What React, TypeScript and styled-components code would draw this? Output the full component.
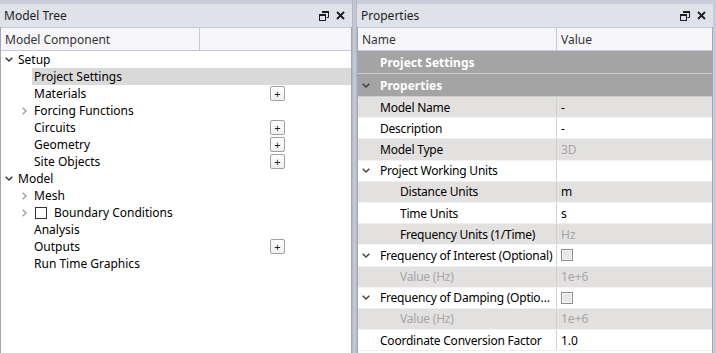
import styled, { createGlobalStyle } from 'styled-components';

const GlobalStyle = createGlobalStyle`
  html, body {
    margin: 0;
    padding: 0;
  }
  body {
    background: #c9cdda;
    font-family: 'Noto Sans', 'DejaVu Sans', sans-serif;
    font-size: 12px;
    color: #000;
  }
`;

const Workspace = styled.div`
  display: flex;
  height: 353px;
  padding-top: 4px;
  box-sizing: border-box;
  background: #c9cdda;
  overflow: hidden;
`;

const Panel = styled.section<{ $width?: number }>`
  display: flex;
  flex-direction: column;
  width: ${({ $width }) => ($width ? `${$width}px` : 'auto')};
  flex: ${({ $width }) => ($width ? 'none' : '1')};
  margin-right: ${({ $width }) => ($width ? '0' : '3px')};
  min-width: 0;
`;

const Splitter = styled.div`
  width: 5px;
  flex: none;
  margin-top: -4px;
  background: #c3c7d3;
  border-left: 1px solid #b4b8c4;
  border-right: 1px solid #b4b8c4;
  box-sizing: border-box;
`;

const TitleBar = styled.header`
  display: flex;
  align-items: center;
  height: 23px;
  flex: none;
  padding: 0 7px 0 4px;
  background: #dfe2ea;
  font-size: 12px;
  color: #1e1e1e;
`;

const TitleText = styled.span`
  flex: 1;
`;

const TitleButtons = styled.div`
  display: flex;
  align-items: center;
  gap: 7px;
`;

const Body = styled.div`
  flex: 1;
  background: #fff;
  border-left: 1px solid #a3a7b3;
  border-right: 1px solid #a3a7b3;
  overflow: hidden;
  min-height: 0;
`;

const HeaderRow = styled.div<{ $cols: string }>`
  display: grid;
  grid-template-columns: ${({ $cols }) => $cols};
  height: 24px;
  box-sizing: border-box;
  background: #f6f6f9;
  border-bottom: 1px solid #c4c9d6;
  border-top: 1px solid #c4c9d6;
`;

const HeaderCell = styled.div<{ $pad: number }>`
  display: flex;
  align-items: center;
  padding-left: ${({ $pad }) => $pad}px;
  border-right: 1px solid #c4c9d6;
  color: #333;
  font-size: 12px;
  &:last-child {
    border-right: none;
  }
`;

/* ---------- model tree ---------- */

const TreeRow = styled.div<{ $indent: number }>`
  display: flex;
  align-items: stretch;
  height: 17px;
  padding-left: ${({ $indent }) => $indent}px;
`;

const ChevronSlot = styled.div`
  width: 15px;
  flex: none;
  display: flex;
  align-items: center;
  justify-content: center;
`;

const TreeItem = styled.div<{ $selected?: boolean }>`
  flex: 1;
  display: flex;
  align-items: center;
  padding-left: 2px;
  background: ${({ $selected }) => ($selected ? '#d9d9d9' : 'transparent')};
`;

const TreeLabel = styled.span`
  flex: 1;
  white-space: nowrap;
`;

const TreeCheck = styled.span`
  width: 10px;
  height: 10px;
  border: 1px solid #333;
  background: #fff;
  margin: 0 7px 0 1px;
`;

const PlusButton = styled.span`
  width: 13px;
  height: 13px;
  margin-right: 66px;
  border: 1px solid #a0a0a0;
  border-radius: 2px;
  background: linear-gradient(#ffffff, #f0f0f0);
  display: flex;
  align-items: center;
  justify-content: center;
  font-size: 11px;
  line-height: 1;
  color: #222;
`;

/* ---------- property grid ---------- */

const CategoryRow = styled.div`
  display: flex;
  align-items: center;
  height: 23px;
  box-sizing: border-box;
  background: #a4a4a4;
  border-bottom: 1px solid #cfcfcf;
  color: #fff;
  font-weight: bold;
  padding-left: 4px;
`;

const PropRow = styled.div<{ $shaded: boolean }>`
  display: grid;
  grid-template-columns: 199px 1fr;
  height: 21.2px;
  box-sizing: border-box;
  background: ${({ $shaded }) => ($shaded ? '#e3e0e0' : '#fff')};
  border-bottom: 1px solid ${({ $shaded }) => ($shaded ? '#f4f2f2' : '#eeeeee')};
`;

const NameCell = styled.div<{ $disabled?: boolean }>`
  display: flex;
  align-items: center;
  padding-left: 4px;
  border-right: 1px solid #d0d0d0;
  color: ${({ $disabled }) => ($disabled ? '#a6a6a6' : '#000')};
  min-width: 0;
`;

const ExpandSlot = styled.span<{ $level: number }>`
  width: ${({ $level }) => ($level === 2 ? 38 : 18)}px;
  flex: none;
  display: flex;
  align-items: center;
`;

const NameText = styled.span`
  overflow: hidden;
  white-space: nowrap;
  text-overflow: ellipsis;
  padding-right: 1px;
  letter-spacing: -0.22px;
`;

const ValueCell = styled.div<{ $disabled?: boolean }>`
  display: flex;
  align-items: center;
  padding-left: 4px;
  color: ${({ $disabled }) => ($disabled ? '#a6a6a6' : '#000')};
`;

const ValueCheck = styled.span`
  width: 10px;
  height: 10px;
  border: 1px solid #8e8e8e;
  background: #e6e6e6;
  box-shadow: inset 0 0 0 1px #f6f6f6;
`;

const RestoreIcon = () => (
  <svg width="10" height="10" viewBox="0 0 10 10">
    <path d="M3 0.5h6.5v6h-2" fill="none" stroke="#1e1e1e" strokeWidth="1" />
    <rect x="3" y="0" width="7" height="2" fill="#1e1e1e" />
    <rect x="0.5" y="3.5" width="6" height="6" fill="none" stroke="#1e1e1e" strokeWidth="1" />
    <rect x="0" y="3" width="7" height="2" fill="#1e1e1e" />
  </svg>
);

const CloseIcon = () => (
  <svg width="9" height="9" viewBox="0 0 9 9">
    <path d="M1 1L8 8M8 1L1 8" stroke="#1e1e1e" strokeWidth="1.8" />
  </svg>
);

const ChevronDown = ({ color = '#404040' }: { color?: string }) => (
  <svg width="8" height="5" viewBox="0 0 8 5">
    <path d="M0.7 0.7L4 4L7.3 0.7" fill="none" stroke={color} strokeWidth="1.4" />
  </svg>
);

const ChevronRight = () => (
  <svg width="5" height="8" viewBox="0 0 5 8">
    <path d="M0.7 0.7L4 4L0.7 7.3" fill="none" stroke="#a0a0a0" strokeWidth="1.4" />
  </svg>
);

interface TreeNode {
  label: string;
  level: 1 | 2;
  expander?: 'open' | 'closed';
  plus?: boolean;
  selected?: boolean;
  checkbox?: boolean;
}

const treeNodes: TreeNode[] = [
  { label: 'Setup', level: 1, expander: 'open' },
  { label: 'Project Settings', level: 2, selected: true },
  { label: 'Materials', level: 2, plus: true },
  { label: 'Forcing Functions', level: 2, expander: 'closed' },
  { label: 'Circuits', level: 2, plus: true },
  { label: 'Geometry', level: 2, plus: true },
  { label: 'Site Objects', level: 2, plus: true },
  { label: 'Model', level: 1, expander: 'open' },
  { label: 'Mesh', level: 2, expander: 'closed' },
  { label: 'Boundary Conditions', level: 2, expander: 'closed', checkbox: true },
  { label: 'Analysis', level: 2 },
  { label: 'Outputs', level: 2, plus: true },
  { label: 'Run Time Graphics', level: 2 },
];

interface PropItem {
  name: string;
  value?: string;
  level: 1 | 2;
  expandable?: boolean;
  disabled?: boolean;
  check?: boolean;
}

const props: PropItem[] = [
  { name: 'Model Name', value: '-', level: 1 },
  { name: 'Description', value: '-', level: 1 },
  { name: 'Model Type', value: '3D', level: 1, disabled: true },
  { name: 'Project Working Units', level: 1, expandable: true },
  { name: 'Distance Units', value: 'm', level: 2 },
  { name: 'Time Units', value: 's', level: 2 },
  { name: 'Frequency Units (1/Time)', value: 'Hz', level: 2, disabled: true },
  { name: 'Frequency of Interest (Optional)', level: 1, expandable: true, check: true },
  { name: 'Value (Hz)', value: '1e+6', level: 2, disabled: true },
  { name: 'Frequency of Damping (Optional)', level: 1, expandable: true, check: true },
  { name: 'Value (Hz)', value: '1e+6', level: 2, disabled: true },
  { name: 'Coordinate Conversion Factor', value: '1.0', level: 1 },
];

const PanelTitle = ({ title }: { title: string }) => (
  <TitleBar>
    <TitleText>{title}</TitleText>
    <TitleButtons>
      <RestoreIcon />
      <CloseIcon />
    </TitleButtons>
  </TitleBar>
);

export default function App() {
  return (
    <>
      <GlobalStyle />
      <Workspace>
        <Panel $width={352}>
          <PanelTitle title="Model Tree" />
          <Body>
            <HeaderRow $cols="199px 1fr">
              <HeaderCell $pad={4}>Model Component</HeaderCell>
              <HeaderCell $pad={4} />
            </HeaderRow>
            {treeNodes.map((node) => (
              <TreeRow key={node.label} $indent={node.level === 1 ? 0 : 16}>
                <ChevronSlot>
                  {node.expander === 'open' && <ChevronDown color="#333" />}
                  {node.expander === 'closed' && <ChevronRight />}
                </ChevronSlot>
                <TreeItem $selected={node.selected}>
                  {node.checkbox && <TreeCheck />}
                  <TreeLabel>{node.label}</TreeLabel>
                  {node.plus && <PlusButton>+</PlusButton>}
                </TreeItem>
              </TreeRow>
            ))}
          </Body>
        </Panel>
        <Splitter />
        <Panel>
          <PanelTitle title="Properties" />
          <Body>
            <HeaderRow $cols="199px 1fr">
              <HeaderCell $pad={4}>Name</HeaderCell>
              <HeaderCell $pad={4}>Value</HeaderCell>
            </HeaderRow>
            <CategoryRow>
              <ExpandSlot $level={1} />
              Project Settings
            </CategoryRow>
            <CategoryRow>
              <ExpandSlot $level={1}>
                <ChevronDown color="#3a3a3a" />
              </ExpandSlot>
              Properties
            </CategoryRow>
            {props.map((p, i) => (
              <PropRow key={`${p.name}-${i}`} $shaded={i % 2 === 0}>
                <NameCell $disabled={p.disabled && p.name === 'Value (Hz)'}>
                  <ExpandSlot $level={p.level}>{p.expandable && <ChevronDown />}</ExpandSlot>
                  <NameText>{p.name}</NameText>
                </NameCell>
                <ValueCell $disabled={p.disabled}>
                  {p.check ? <ValueCheck /> : p.value}
                </ValueCell>
              </PropRow>
            ))}
          </Body>
        </Panel>
      </Workspace>
    </>
  );
}
